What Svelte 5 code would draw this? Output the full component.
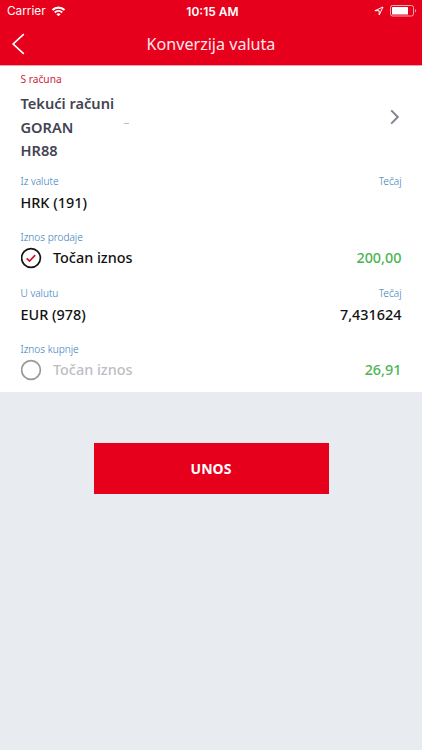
<script>
	let sell = true;

	const account = {
		type: 'Tekući računi',
		owner: 'GORAN',
		iban: 'HR88'
	};

	$: fields = [
		{ label: 'Iz valute', value: 'HRK (191)', rateLabel: 'Tečaj', right: '' },
		{ label: 'Iznos prodaje', radio: true, checked: sell, value: 'Točan iznos', right: '200,00' },
		{ label: 'U valutu', value: 'EUR (978)', rateLabel: 'Tečaj', right: '7,431624' },
		{ label: 'Iznos kupnje', radio: true, checked: !sell, value: 'Točan iznos', right: '26,91' }
	];

	function toggle(field) {
		if (field.radio && !field.checked) sell = !sell;
	}
</script>

<main>
	<header>
		<div class="status">
			<div class="carrier">
				<span>Carrier</span>
				<svg width="15" height="11" viewBox="0 0 16 12">
					<g fill="none" stroke="#fff" stroke-width="2.2">
						<path d="M1.4 4.4a9.6 9.6 0 0 1 13.2 0" />
						<path d="M3.9 7a6 6 0 0 1 8.2 0" />
					</g>
					<path d="M8 11.3L5.7 9a3.3 3.3 0 0 1 4.6 0z" fill="#fff" />
				</svg>
			</div>
			<time>10:15 AM</time>
			<div class="power">
				<svg width="10" height="10" viewBox="0 0 10 10">
					<path d="M9 1L.9 4.7H5.2V9z" fill="none" stroke="#fff" stroke-width="1" stroke-linejoin="round" />
				</svg>
				<svg width="27" height="12" viewBox="0 0 27 12">
					<rect x=".5" y=".5" width="23" height="10.5" rx="2" fill="none" stroke="#fff" stroke-opacity=".65" />
					<rect x="2" y="2" width="16" height="7.5" rx=".6" fill="#fff" />
					<path d="M25 4q1.2 .5 1.2 1.8t-1.2 1.8z" fill="#fff" fill-opacity=".6" />
				</svg>
			</div>
		</div>
		<nav>
			<svg class="back" width="14" height="22" viewBox="0 0 14 22">
				<path d="M12.8 1.2L2.2 11l10.6 9.8" fill="none" stroke="#fff" stroke-width="1.7" />
			</svg>
			<h1>Konverzija valuta</h1>
		</nav>
	</header>

	<section class="card">
		<div class="from">S računa</div>
		<div class="account">
			<div class="lines">
				<div>{account.type}</div>
				<div class="owner"><span>{account.owner}</span><i></i></div>
				<div>{account.iban}</div>
			</div>
			<svg class="open" width="10" height="16" viewBox="0 0 10 16">
				<path d="M1.2 1.4L7.8 8l-6.6 6.6" fill="none" stroke="#858391" stroke-width="2" />
			</svg>
		</div>

		{#each fields as field}
			<div class="field">
				<div class="labels">
					<span>{field.label}</span>
					<span>{field.rateLabel ?? ''}</span>
				</div>
				<div class="values" class:plain={!field.radio} class:off={field.radio && !field.checked}>
					{#if field.radio}
						<button class="radio" aria-label={field.label} on:click={() => toggle(field)}>
							<svg width="22" height="22" viewBox="0 0 22 22">
								<circle cx="10" cy="11" r="9.4" fill="none" stroke={field.checked ? '#151515' : '#999'} stroke-width="1.7" />
								{#if field.checked}
									<path d="M5.7 11.3l2.8 2.7 5.7-5.8" fill="none" stroke="#c8152b" stroke-width="1.7" />
								{/if}
							</svg>
						</button>
					{/if}
					<span class="name">{field.value}</span>
					<span class="right" class:amount={field.radio}>{field.right}</span>
				</div>
			</div>
		{/each}
	</section>

	<button class="submit">UNOS</button>
</main>

<style>
	:global(body) {
		background: #e8ebf0;
	}

	main {
		display: flex;
		flex-direction: column;
		height: 750px;
		background: #e8ebf0;
		font-family: "Noto Sans", sans-serif;
		overflow: hidden;
	}

	svg {
		display: block;
		flex: none;
	}

	header {
		height: 65px;
		background: #e6001b;
		color: #fff;
		border-bottom: 1px solid #f4a3ad;
		box-sizing: content-box;
	}

	.status {
		display: grid;
		grid-template-columns: 1fr auto 1fr;
		align-items: center;
		height: 22px;
		padding: 0 5px 0 7px;
		font-family: Inter, sans-serif;
		font-size: 12px;
	}

	.carrier {
		display: flex;
		align-items: center;
		gap: 5px;
		font-size: 11.8px;
	}

	.status time {
		padding-left: 1px;
		font-weight: 600;
	}

	.power {
		display: flex;
		align-items: center;
		justify-content: flex-end;
		gap: 6px;
	}

	nav {
		display: grid;
		grid-template-columns: 40px 1fr 40px;
		align-items: center;
		height: 43px;
	}

	.back {
		margin-left: 11px;
	}

	h1 {
		margin: 0;
		font-size: 16.1px;
		font-weight: 400;
		line-height: 22px;
		text-align: center;
		color: #ffe9ec;
	}

	.card {
		height: 326px;
		padding: 5px 20.5px 0;
		box-sizing: border-box;
		background: #fff;
	}

	.from {
		height: 21px;
		font-size: 10.2px;
		line-height: 16px;
		color: #d0243c;
	}

	.account {
		display: flex;
		align-items: flex-start;
		justify-content: space-between;
		height: 72px;
		margin-bottom: 9px;
		font-size: 14.6px;
		font-weight: 600;
		line-height: 23.6px;
		color: #444353;
	}

	.owner {
		display: flex;
	}

	.owner span {
		width: 52px;
	}

	.owner i {
		width: 5px;
		height: 1px;
		margin: 7px 0 0 51px;
		background: #bbb;
	}

	.open {
		margin: 17px 2px 0 0;
	}

	.field {
		height: 56px;
	}

	.labels {
		display: flex;
		justify-content: space-between;
		height: 16px;
		font-size: 10.1px;
		font-weight: 300;
		line-height: 16px;
		color: #2f78b8;
	}

	.values {
		display: flex;
		align-items: center;
		height: 26px;
		font-size: 14.4px;
		font-weight: 500;
		line-height: 26px;
		color: #111;
	}

	.plain {
		padding-top: 1px;
	}

	.radio {
		width: 32.5px;
		padding: 0;
		border: 0;
		background: none;
	}

	.off .name {
		color: #bdbdc4;
	}

	.right {
		margin-left: auto;
	}

	.amount {
		color: #4db455;
	}

	.submit {
		align-self: center;
		width: 235px;
		height: 51px;
		margin-top: 51px;
		padding: 0;
		border: 0;
		background: #e6001b;
		color: #fff;
		font-family: inherit;
		font-size: 14px;
		font-weight: 700;
	}
</style>
